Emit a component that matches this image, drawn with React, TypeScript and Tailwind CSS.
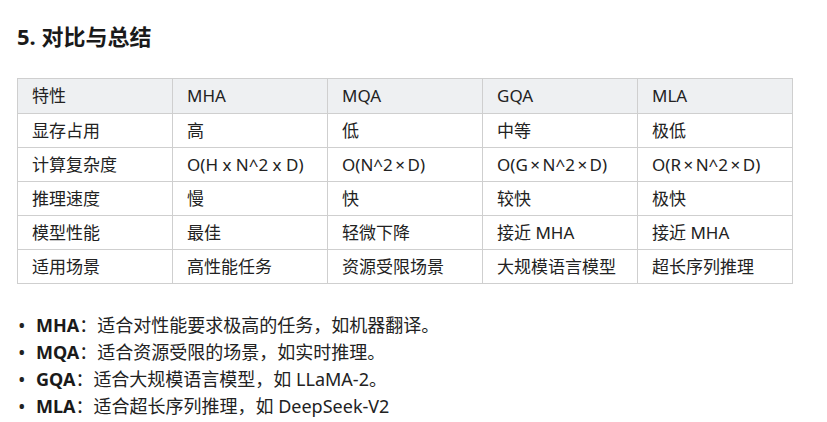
const rows = [
  ["显存占用", "高", "低", "中等", "极低"],
  ["计算复杂度", "O(H x N^2 x D)", "O(N^2×D)", "O(G×N^2×D)", "O(R×N^2×D)"],
  ["推理速度", "慢", "快", "较快", "极快"],
  ["模型性能", "最佳", "轻微下降", "接近 MHA", "接近 MHA"],
  ["适用场景", "高性能任务", "资源受限场景", "大规模语言模型", "超长序列推理"],
];

const notes = [
  ["MHA", "适合对性能要求极高的任务，如机器翻译。"],
  ["MQA", "适合资源受限的场景，如实时推理。"],
  ["GQA", "适合大规模语言模型，如 LLaMA-2。"],
  ["MLA", "适合超长序列推理，如 DeepSeek-V2"],
];

// the × sign is drawn wider in the original
function Cell({ text }: { text: string }) {
  const parts = text.split("×");
  return (
    <>
      {parts.map((p, i) => (
        <span key={i}>
          {i > 0 && <span className="px-[2.5px]">×</span>}
          {p}
        </span>
      ))}
    </>
  );
}

export default function App() {
  return (
    <div
      className="w-[827px] h-[422px] bg-white text-[#222] px-[17px] pt-[21px]"
      style={{ fontFamily: '"Noto Sans", "Noto Sans CJK SC", sans-serif' }}
    >
      <h3 className="text-[22px] font-bold leading-[30px] text-[#1a1a1a]">5. 对比与总结</h3>

      <table className="mt-[27px] border-collapse table-fixed w-[776px] text-[17px]">
        <thead>
          <tr className="bg-[#eef0f2]">
            {["特性", "MHA", "MQA", "GQA", "MLA"].map((h) => (
              <th key={h} className="w-[155px] h-[35px] border border-[#cfcfcf] px-[14px] py-0 text-left font-normal">
                {h}
              </th>
            ))}
          </tr>
        </thead>
        <tbody>
          {rows.map((r, i) => (
            <tr key={i}>
              {r.map((c, j) => (
                <td key={j} className="h-[34px] border border-[#cfcfcf] px-[14px] py-0 whitespace-nowrap">
                  <Cell text={c} />
                </td>
              ))}
            </tr>
          ))}
        </tbody>
      </table>

      <ul className="mt-[28px] text-[18px] leading-[27px]">
        {notes.map(([k, v]) => (
          <li key={k} className="flex items-center">
            <span className="w-[19px] pl-[1px] text-[20px] leading-none">•</span>
            <span>
              <b className="font-bold text-[#1a1a1a]">{k}</b>：{v}
            </span>
          </li>
        ))}
      </ul>
    </div>
  );
}
